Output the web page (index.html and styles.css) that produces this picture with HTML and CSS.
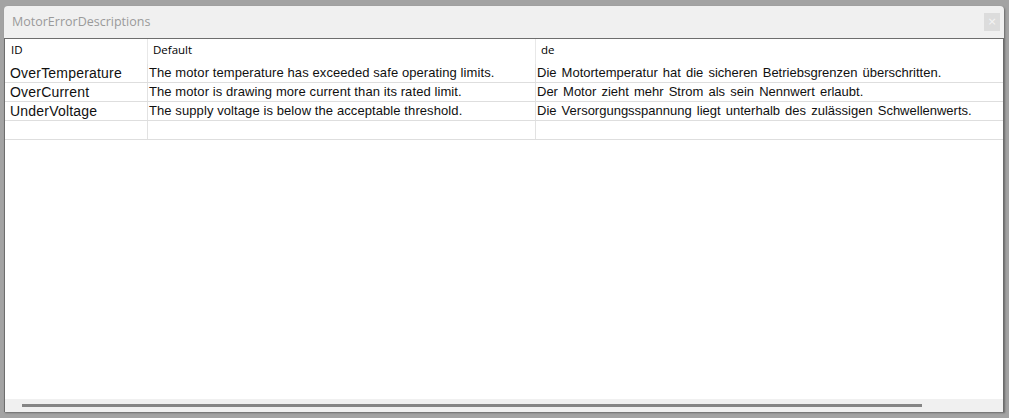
FILE: index.html
```html
<!DOCTYPE html>
<html>
<head>
<meta charset="utf-8">
<link rel="stylesheet" href="styles.css">
</head>
<body>
<div class="window">
  <div class="titlebar">
    <span class="title">MotorErrorDescriptions</span>
    <span class="close">×</span>
  </div>
  <div class="content">
    <div class="grid">
      <div class="row head">
        <div class="cell c1">ID</div>
        <div class="cell c2">Default</div>
        <div class="cell c3">de</div>
      </div>
      <div class="row">
        <div class="cell c1 id">OverTemperature</div>
        <div class="cell c2 eng">The motor temperature has exceeded safe operating limits.</div>
        <div class="cell c3 ger">Die Motortemperatur hat die sicheren Betriebsgrenzen überschritten.</div>
      </div>
      <div class="row">
        <div class="cell c1 id">OverCurrent</div>
        <div class="cell c2 eng">The motor is drawing more current than its rated limit.</div>
        <div class="cell c3 ger">Der Motor zieht mehr Strom als sein Nennwert erlaubt.</div>
      </div>
      <div class="row">
        <div class="cell c1 id">UnderVoltage</div>
        <div class="cell c2 eng">The supply voltage is below the acceptable threshold.</div>
        <div class="cell c3 ger">Die Versorgungsspannung liegt unterhalb des zulässigen Schwellenwerts.</div>
      </div>
      <div class="row">
        <div class="cell c1 id"></div>
        <div class="cell c2"></div>
        <div class="cell c3"></div>
      </div>
    </div>
    <div class="hscroll"><div class="thumb"></div></div>
  </div>
</div>
</body>
</html>
```
FILE: styles.css
```css
html, body {
  margin: 0;
  padding: 0;
  background: #a3a3a3;
  width: 1009px;
  height: 418px;
  overflow: hidden;
}
.window {
  margin: 6px 0 0 4px;
  width: 1000px;
  height: 406px;
  background: #f0f0f0;
  border-radius: 4px 4px 0 0;
  display: flex;
  flex-direction: column;
  box-shadow: 1px 1px 2px rgba(0,0,0,0.35);
}
.titlebar {
  height: 32px;
  display: flex;
  align-items: center;
  justify-content: space-between;
  padding: 0 4px 0 8px;
  flex: none;
}
.title {
  font-family: "Open Sans", "DejaVu Sans", sans-serif;
  font-size: 12.5px;
  color: #9a9a9a;
  margin-top: -2px;
}
.close {
  width: 16px;
  height: 18px;
  background: #dcdcdc;
  color: #f4f4f4;
  font-family: "DejaVu Sans", sans-serif;
  font-size: 11px;
  line-height: 18px;
  text-align: center;
  margin-top: -1px;
}
.content {
  flex: 1;
  background: #fff;
  border-left: 1px solid #6d6d6d;
  border-top: 1px solid #6d6d6d;
  border-right: 1px solid #6d6d6d;
  display: flex;
  flex-direction: column;
  justify-content: space-between;
}
.grid {
  display: flex;
  flex-direction: column;
}
.row {
  display: flex;
  height: 18px;
  border-bottom: 1px solid #dedede;
}
.row.head {
  height: 25px;
  border-bottom: none;
}
.cell {
  font-family: "Liberation Sans", Arial, sans-serif;
  font-size: 13px;
  color: #101010;
  line-height: 18px;
  white-space: nowrap;
  overflow: hidden;
  box-sizing: border-box;
}
.c1 { width: 143px; padding-left: 5px; border-right: 1px solid #e2e2e2; }
.c2 { width: 388px; padding-left: 1px; border-right: 1px solid #e2e2e2; }
.c3 { flex: 1; padding-left: 1px; }
.head .cell {
  font-family: "Open Sans", "DejaVu Sans", sans-serif;
  font-size: 11.5px;
  line-height: 22px;
  color: #000;
}
.head .c1 { padding-left: 6px; }
.head .c2 { padding-left: 5px; }
.head .c3 { padding-left: 5px; }
.head .c1, .head .c2 { border-right-color: #e8e8e8; }
.id {
  font-size: 14px;
  letter-spacing: 0.2px;
}
.eng {
  letter-spacing: 0.09px;
}
.ger {
  word-spacing: 1.5px;
}
.hscroll {
  height: 13px;
  background: #f0f0f0;
  display: flex;
  align-items: center;
  padding-left: 17px;
}
.thumb {
  width: 900px;
  height: 3px;
  background: #858585;
}
```
